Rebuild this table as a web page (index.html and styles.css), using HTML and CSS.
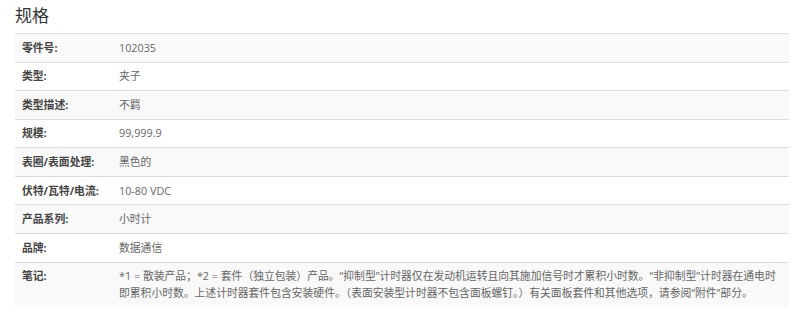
FILE: index.html
```html
<!DOCTYPE html>
<html lang="zh">
<head>
<meta charset="utf-8">
<link rel="stylesheet" href="styles.css">
</head>
<body>
<div class="wrap">
  <h2 class="title">规格</h2>
  <table class="specs">
    <tbody>
      <tr><th>零件号:</th><td>102035</td></tr>
      <tr><th>类型:</th><td>夹子</td></tr>
      <tr><th>类型描述:</th><td>不羁</td></tr>
      <tr><th>规模:</th><td>99,999.9</td></tr>
      <tr><th>表圈/表面处理:</th><td>黑色的</td></tr>
      <tr><th>伏特/瓦特/电流:</th><td>10-80 VDC</td></tr>
      <tr><th>产品系列:</th><td>小时计</td></tr>
      <tr><th>品牌:</th><td>数据通信</td></tr>
      <tr><th>笔记:</th><td>*1 = 散装产品；*2 = 套件（独立包装）产品。“抑制型”计时器仅在发动机运转且向其施加信号时才累积小时数。“非抑制型”计时器在通电时即累积小时数。上述计时器套件包含安装硬件。（表面安装型计时器不包含面板螺钉。）有关面板套件和其他选项，请参阅“附件”部分。</td></tr>
    </tbody>
  </table>
</div>
</body>
</html>
```

FILE: styles.css
```css
html, body {
  margin: 0;
  padding: 0;
  background: #fff;
}
body {
  font-family: "Open Sans", "Noto Sans CJK SC", sans-serif;
  color: #555;
}
.wrap {
  width: 774px;
  padding: 0 0 0 15px;
}
.title {
  margin: 0;
  padding-top: 5px;
  height: 33px;
  font-size: 17px;
  font-weight: 400;
  line-height: 22px;
  color: #333;
  box-sizing: border-box;
}
.specs {
  width: 100%;
  border-collapse: collapse;
  font-size: 10.8px;
  line-height: 16.3px;
}
.specs tr {
  border-top: 1px solid #ddd;
}
.specs tr:nth-child(odd) {
  background: #f9f9f9;
}
.specs th,
.specs td {
  padding: 5.7px 7px 5.6px;
  vertical-align: top;
  text-align: left;
}
.specs th {
  width: 83px;
  font-weight: 700;
  color: #444;
}
.specs td {
  color: #666;
}
```
